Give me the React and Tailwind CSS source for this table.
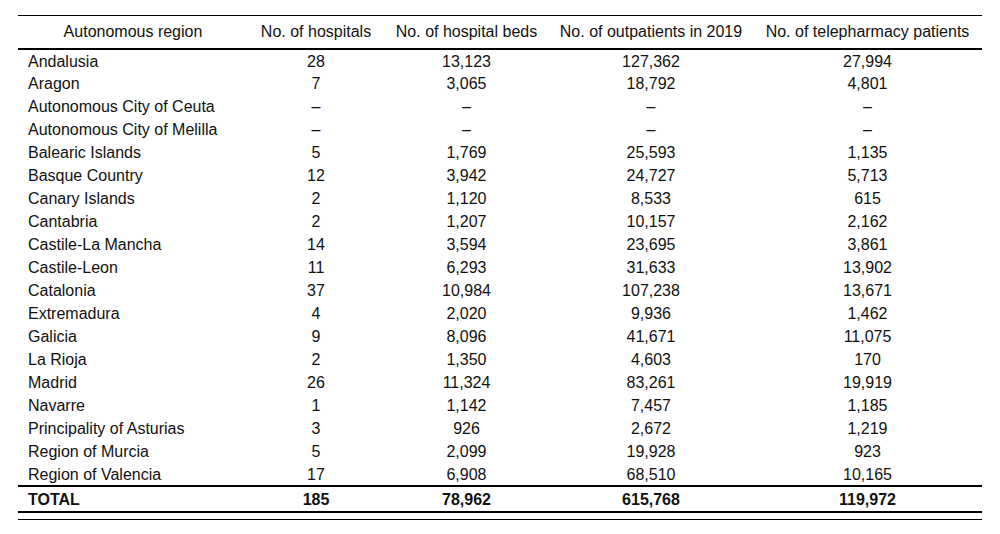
import React from "react";

const rows = [
  ["Andalusia", "28", "13,123", "127,362", "27,994"],
  ["Aragon", "7", "3,065", "18,792", "4,801"],
  ["Autonomous City of Ceuta", "–", "–", "–", "–"],
  ["Autonomous City of Melilla", "–", "–", "–", "–"],
  ["Balearic Islands", "5", "1,769", "25,593", "1,135"],
  ["Basque Country", "12", "3,942", "24,727", "5,713"],
  ["Canary Islands", "2", "1,120", "8,533", "615"],
  ["Cantabria", "2", "1,207", "10,157", "2,162"],
  ["Castile-La Mancha", "14", "3,594", "23,695", "3,861"],
  ["Castile-Leon", "11", "6,293", "31,633", "13,902"],
  ["Catalonia", "37", "10,984", "107,238", "13,671"],
  ["Extremadura", "4", "2,020", "9,936", "1,462"],
  ["Galicia", "9", "8,096", "41,671", "11,075"],
  ["La Rioja", "2", "1,350", "4,603", "170"],
  ["Madrid", "26", "11,324", "83,261", "19,919"],
  ["Navarre", "1", "1,142", "7,457", "1,185"],
  ["Principality of Asturias", "3", "926", "2,672", "1,219"],
  ["Region of Murcia", "5", "2,099", "19,928", "923"],
  ["Region of Valencia", "17", "6,908", "68,510", "10,165"],
];

export default function App() {
  return (
    <div className="w-[1000px] h-[534px] bg-white text-[#111]" style={{ fontFamily: '"Liberation Sans", Arial, sans-serif' }}>
      <div className="pt-[15px] pl-[18px]">
        <table className="table-fixed border-collapse w-[964px] text-[16px] leading-none">
          <colgroup>
            <col className="w-[230px]" />
            <col className="w-[136px]" />
            <col className="w-[165px]" />
            <col className="w-[204px]" />
            <col className="w-[229px]" />
          </colgroup>
          <thead>
            <tr className="h-[33px] border-t border-black border-b-2">
              <th className="font-normal text-center pt-[1px]">Autonomous region</th>
              <th className="font-normal text-center pt-[1px]">No. of hospitals</th>
              <th className="font-normal text-center pt-[1px]">No. of hospital beds</th>
              <th className="font-normal text-center pt-[1px]">No. of outpatients in 2019</th>
              <th className="font-normal text-center pt-[1px]">No. of telepharmacy patients</th>
            </tr>
          </thead>
          <tbody>
            {rows.map((r) => (
              <tr key={r[0]} className="h-[23px]">
                <td className="pl-[10px] pt-[2px] text-left whitespace-nowrap">{r[0]}</td>
                <td className="pt-[2px] text-center">{r[1]}</td>
                <td className="pt-[2px] text-center">{r[2]}</td>
                <td className="pt-[2px] text-center">{r[3]}</td>
                <td className="pt-[2px] text-center">{r[4]}</td>
              </tr>
            ))}
            <tr className="h-[26px] border-t-2 border-b-2 border-black font-bold">
              <td className="pl-[10px] pt-[3px] text-left">TOTAL</td>
              <td className="pt-[3px] text-center">185</td>
              <td className="pt-[3px] text-center">78,962</td>
              <td className="pt-[3px] text-center">615,768</td>
              <td className="pt-[3px] text-center">119,972</td>
            </tr>
          </tbody>
        </table>
        <div className="w-[964px] mt-[6px] border-t border-black"></div>
      </div>
    </div>
  );
}
